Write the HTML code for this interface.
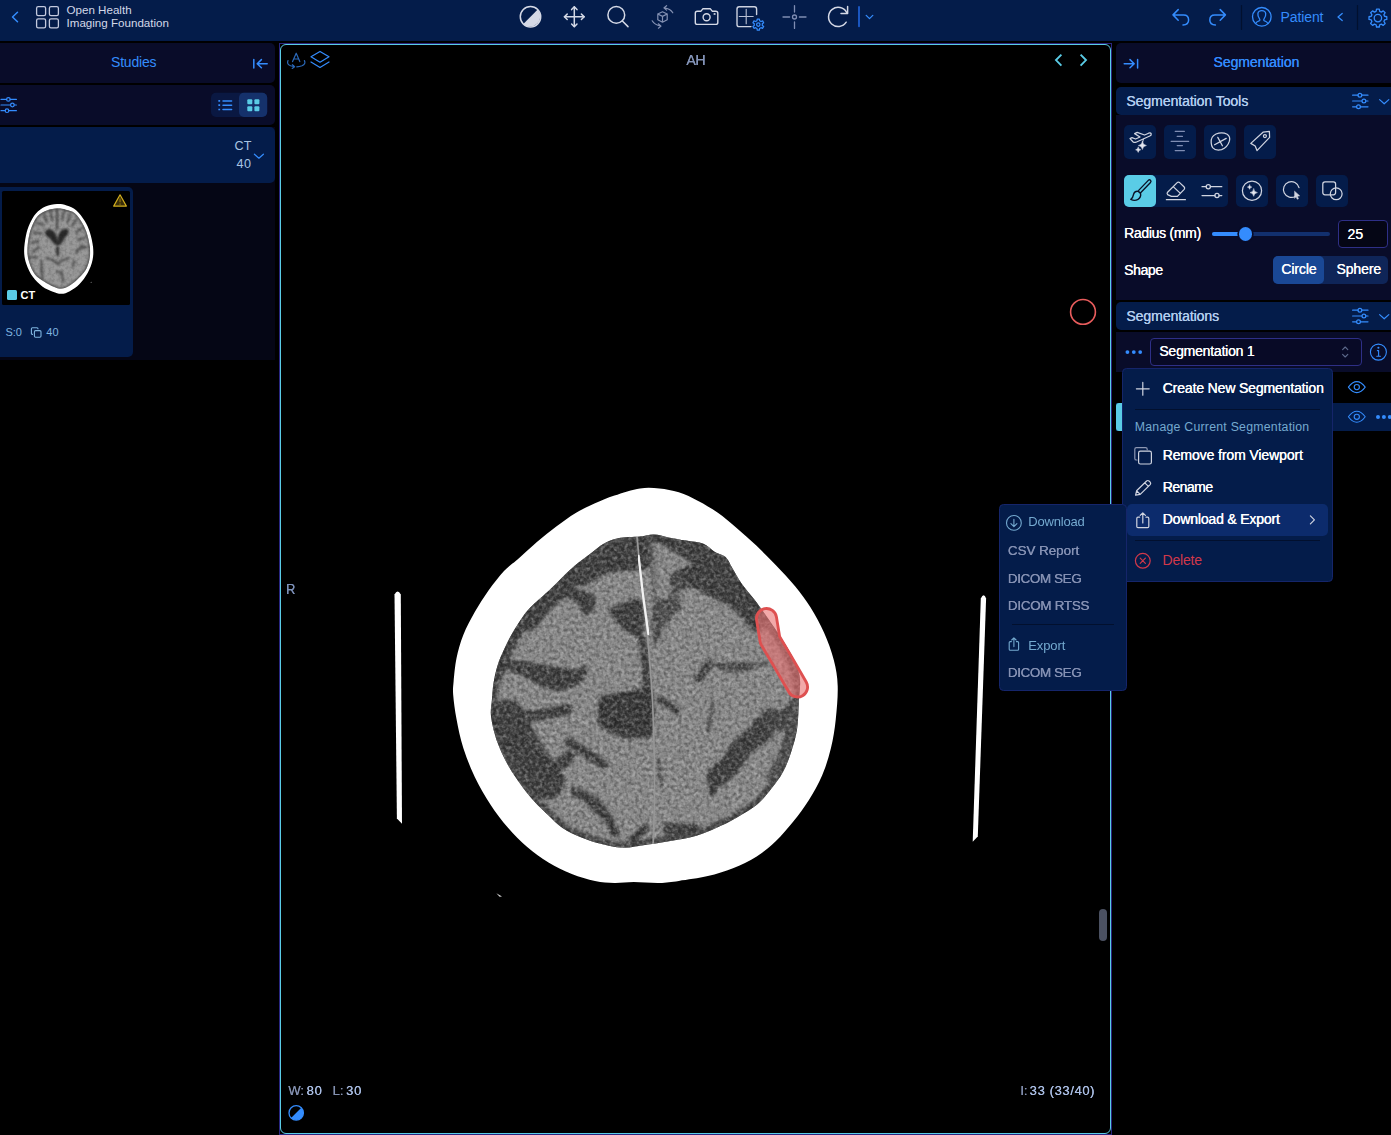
<!DOCTYPE html>
<html lang="en">
<head>
<meta charset="utf-8">
<title>OHIF Viewer</title>
<style>
*{box-sizing:border-box;margin:0;padding:0}
html,body{width:1391px;height:1135px;overflow:hidden;background:#000;font-family:"Liberation Sans",sans-serif;color:#fff}
.abs{position:absolute}
#hdr{position:absolute;left:0;top:0;width:1391px;height:41px;background:#041c4a}
#hdr svg{position:absolute;overflow:visible}
.t{position:absolute;white-space:nowrap;line-height:1}
svg{display:block}
/* left panel */
#lp{position:absolute;left:0;top:43px;width:275px;height:317px;background:linear-gradient(#000 0,#000 84px,#050615 84px)}
.row{position:absolute;left:0;width:275px;background:#090c29;border-radius:0 5px 5px 0}
/* viewport */
#vp{position:absolute;left:279px;top:43px;width:833px;height:1092px;border:1px solid #2a2680;border-radius:0;background:#000}
#vpi{position:absolute;left:0;top:0;right:0;bottom:0;border:1px solid #5acce6;border-radius:6px}
/* right panel */
#rp{position:absolute;left:1116px;top:43px;width:275px;height:388px;background:#000}
.tb{width:32px;height:32.2px;border-radius:5px;background:#041c4a}
.mi{font-size:14px;color:#fff;letter-spacing:0.02px;text-shadow:0.3px 0 0 #fff}
.si{font-size:13.4px;color:#8591b3;letter-spacing:0.1px;text-shadow:0.3px 0 0 #8591b3}
.vt{top:1084px;font-size:13px;color:#a9bde3;text-shadow:0.25px 0 0 currentColor}
#rp .t{text-shadow:0.22px 0 0 currentColor}
</style>
</head>
<body>
<div id="wrap" style="position:absolute;left:0;top:0;width:1391px;height:1135px">
<!-- HEADER -->
<div id="hdr">
<svg width="1391" height="41" viewBox="0 0 1391 41" style="left:0;top:0" fill="none" stroke-linecap="round" stroke-linejoin="round">
 <!-- back chevron -->
 <path d="M17.5 12.2 L12.5 17 L17.5 21.8" stroke="#348cfd" stroke-width="1.5"/>
 <!-- logo squares -->
 <g stroke="#c3c9de" stroke-width="1.3">
  <rect x="36.6" y="6.6" width="9" height="9" rx="1.6"/><rect x="49.4" y="6.6" width="9" height="9" rx="1.6"/>
  <rect x="36.6" y="18.9" width="9" height="9" rx="1.6"/><rect x="49.4" y="18.9" width="9" height="9" rx="1.6"/>
 </g>
 <!-- contrast -->
 <g stroke="#d5d9e6" stroke-width="1.5">
  <circle cx="530.5" cy="16.8" r="10.2"/>
  <path d="M537.7 9.6 A10.2 10.2 0 0 1 523.3 24 Z" fill="#d5d9e6" stroke="none"/>
 </g>
 <!-- move -->
 <g stroke="#d5d9e6" stroke-width="1.5">
  <path d="M574.3 7 V26.6 M564.5 16.8 H584.1"/>
  <path d="M571.6 9.6 L574.3 6.8 L577 9.6 M571.6 24 L574.3 26.8 L577 24 M567.2 14.1 L564.4 16.8 L567.2 19.5 M581.4 14.1 L584.2 16.8 L581.4 19.5"/>
 </g>
 <!-- search -->
 <g stroke="#d5d9e6" stroke-width="1.5">
  <circle cx="616.3" cy="14.9" r="8.4"/><path d="M622.4 21 L628 26.6"/>
 </g>
 <!-- 3d rotate (dim) -->
 <g stroke="#8491b3" stroke-width="1.2">
  <path d="M662.5 11.8 L667.2 14 V19.8 L662.5 22.2 L657.8 19.8 V14 Z M657.8 14 L662.5 16.4 L667.2 14 M662.5 16.4 V22.2"/>
  <path d="M672.8 12.8 Q670.5 8.8 664.2 7.9 M666.6 5.7 L663.9 7.9 L666.6 10.1"/>
  <path d="M652.2 20.8 Q654.6 24.9 660.6 26 M658.4 23.8 L661 26.1 L658.4 28.2"/>
 </g>
 <!-- camera -->
 <g stroke="#d5d9e6" stroke-width="1.4">
  <path d="M697.3 11.2 H701 L702.8 8.8 H710.4 L712.2 11.2 H715.8 Q717.8 11.2 717.8 13.2 V22.4 Q717.8 24.4 715.8 24.4 H697.3 Q695.3 24.4 695.3 22.4 V13.2 Q695.3 11.2 697.3 11.2 Z"/>
  <circle cx="706.6" cy="17.2" r="3.5"/><circle cx="714.6" cy="14" r="0.4"/>
 </g>
 <!-- grid + gear -->
 <g stroke="#cdd2e0" stroke-width="1.4">
  <path d="M756.6 14.6 V9 Q756.6 6.8 754.4 6.8 H739.2 Q737 6.8 737 9 V24.4 Q737 26.6 739.2 26.6 H751"/>
  <path d="M746.2 9.2 V23.8 M739.2 16.5 H753.2" stroke-width="1.1" stroke="#b9c0d4"/>
 </g>
 <g stroke="#348cfd" stroke-width="1.25" stroke-linejoin="round">
  <path d="M756.98 20.72 L757.26 19.00 L759.34 19.00 L759.62 20.72 L761.00 21.52 L762.63 20.90 L763.67 22.70 L762.32 23.80 L762.32 25.40 L763.67 26.50 L762.63 28.30 L761.00 27.68 L759.62 28.48 L759.34 30.20 L757.26 30.20 L756.98 28.48 L755.60 27.68 L753.97 28.30 L752.93 26.50 L754.28 25.40 L754.28 23.80 L752.93 22.70 L753.97 20.90 L755.60 21.52 Z"/>
  <circle cx="758.3" cy="24.6" r="1.7"/>
 </g>
 <!-- crosshair dim -->
 <g stroke="#7f8db3" stroke-width="1.3">
  <path d="M794.5 5.6 V12 M794.5 22 V28.4 M783 17 H789.6 M799.4 17 H806"/><circle cx="794.5" cy="17" r="2"/>
 </g>
 <!-- reset -->
 <g stroke="#d5d9e6" stroke-width="1.5">
  <path d="M846.6 12.4 A9.6 9.6 0 1 0 846.2 22.2"/><path d="M847.6 6.6 V13.5 H841"/>
 </g>
 <path d="M859 7 V26.2" stroke="#1a56c0" stroke-width="2"/>
 <path d="M866.2 15.4 L869.5 18.6 L872.8 15.4" stroke="#348cfd" stroke-width="1.3"/>
 <!-- undo / redo -->
 <g stroke="#348cfd" stroke-width="1.5">
  <path d="M1178.2 9.6 L1173 14.9 L1178.2 20.2 M1173 14.9 H1183.6 Q1188.6 14.9 1188.6 19.9 Q1188.6 24.6 1183 24.9"/>
  <path d="M1220.2 9.6 L1225.4 14.9 L1220.2 20.2 M1225.4 14.9 H1214.8 Q1209.8 14.9 1209.8 19.9 Q1209.8 24.6 1215.4 24.9"/>
 </g>
 <path d="M1241.5 5.5 V29.5 M1357.5 5.5 V29.5" stroke="#02102e" stroke-width="1.2"/>
 <!-- patient -->
 <g stroke="#348cfd" stroke-width="1.3">
  <circle cx="1261.8" cy="16.8" r="9.3"/>
  <path d="M1255.6 23.6 Q1256.4 21.6 1259.6 20.6 Q1260.4 20 1259.4 18.6 Q1257.6 16.4 1257.9 13.6 Q1258.3 10.6 1261.8 10.6 Q1265.3 10.6 1265.7 13.6 Q1266 16.4 1264.2 18.6 Q1263.2 20 1264 20.6 Q1267.2 21.6 1268 23.6"/>
 </g>
 <path d="M1342.2 13.4 L1338 17 L1342.2 20.6" stroke="#348cfd" stroke-width="1.3"/>
 <!-- settings gear -->
 <g stroke="#348cfd" stroke-width="1.3" stroke-linejoin="round">
  <path d="M1376.06 11.45 L1376.54 9.20 L1379.26 9.20 L1379.74 11.45 L1381.30 12.10 L1383.23 10.85 L1385.15 12.77 L1383.90 14.70 L1384.55 16.26 L1386.80 16.74 L1386.80 19.46 L1384.55 19.94 L1383.90 21.50 L1385.15 23.43 L1383.23 25.35 L1381.30 24.10 L1379.74 24.75 L1379.26 27.00 L1376.54 27.00 L1376.06 24.75 L1374.50 24.10 L1372.57 25.35 L1370.65 23.43 L1371.90 21.50 L1371.25 19.94 L1369.00 19.46 L1369.00 16.74 L1371.25 16.26 L1371.90 14.70 L1370.65 12.77 L1372.57 10.85 L1374.50 12.10 Z"/>
  <circle cx="1377.9" cy="18.1" r="3.7"/>
 </g>
</svg>
<div class="t" style="left:66.5px;top:3.6px;font-size:11.6px;color:#d3d8e8;letter-spacing:0px">Open Health</div>
<div class="t" style="left:66.5px;top:17.4px;font-size:11.6px;color:#d3d8e8;letter-spacing:0px">Imaging Foundation</div>
<div class="t" style="left:1280.5px;top:9.5px;font-size:14px;color:#348cfd;letter-spacing:-0.1px">Patient</div>
</div>
<!-- LEFT PANEL -->
<div id="lp">
<div class="row" style="top:0;height:40px"></div>
<div class="row" style="top:42px;height:39.5px"></div>
<div class="row" style="top:84px;height:55.5px;background:#041c4a"></div>
<div class="t" style="left:111px;top:12px;font-size:14px;color:#348cfd;letter-spacing:-0.2px">Studies</div>
<svg class="abs" style="left:0;top:0" width="275" height="317" viewBox="0 43 275 317" fill="none" stroke-linecap="round" stroke-linejoin="round">
 <!-- collapse icon -->
 <path d="M253.8 59.4 V68 M267.2 63.7 H257.4 M261.4 59.6 L257.2 63.7 L261.4 67.8" stroke="#348cfd" stroke-width="1.5"/>
 <!-- filter sliders -->
 <g stroke="#348cfd" stroke-width="1.2">
  <path d="M1 99.4 H6.6 M10.2 99.4 H16.4 M1 105 H10.6 M14.2 105 H16.4 M1 110.7 H5.2 M8.8 110.7 H16.4"/>
  <circle cx="8.4" cy="99.4" r="1.8"/><circle cx="12.4" cy="105" r="1.8"/><circle cx="7" cy="110.7" r="1.8"/>
 </g>
 <!-- toggle -->
 <rect x="211" y="92.8" width="56.2" height="24.2" rx="5" fill="#0a1842" stroke="none"/>
 <rect x="239" y="92.8" width="28.2" height="24.2" rx="5" fill="#15316b" stroke="none"/>
 <g stroke="#348cfd" stroke-width="1.5">
  <path d="M223 100.9 H231.6 M223 105.2 H231.6 M223 109.5 H231.6"/>
  <path d="M219.2 100.9 H219.3 M219.2 105.2 H219.3 M219.2 109.5 H219.3" stroke-width="1.7" stroke-linecap="square"/>
 </g>
 <g fill="#5acce6" stroke="none">
  <rect x="247.3" y="99.2" width="5" height="5" rx="1"/><rect x="254.4" y="99.2" width="5" height="5" rx="1"/>
  <rect x="247.3" y="106.2" width="5" height="5" rx="1"/><rect x="254.4" y="106.2" width="5" height="5" rx="1"/>
 </g>
 <path d="M254.4 154.2 L258.9 158.2 L263.4 154.2" stroke="#348cfd" stroke-width="1.2"/>
</svg>
<div class="t" style="left:200px;width:51.4px;text-align:right;top:96.6px;font-size:12.6px;color:#a9c5e3">CT</div>
<div class="t" style="left:200px;width:51.4px;text-align:right;top:114.6px;font-size:12.6px;color:#a9c5e3;letter-spacing:0.5px">40</div>
<!-- thumb card -->
<div class="abs" style="left:0;top:144px;width:133px;height:169.6px;background:#041c4a;border-radius:0 5px 5px 0"></div>
<div class="abs" id="thumb" style="left:2px;top:148px;width:128px;height:114px;background:#000;border-radius:1.5px;overflow:hidden">
<svg width="128" height="114" viewBox="19 28 1210 1078" style="position:absolute;left:0;top:0">
<defs><filter id="tb" x="-10%" y="-10%" width="120%" height="120%"><feGaussianBlur stdDeviation="9"/></filter>
<filter id="tn" x="0" y="0" width="100%" height="100%"><feTurbulence type="fractalNoise" baseFrequency="0.035" numOctaves="2" seed="3"/><feColorMatrix type="matrix" values="0 0 0 0 0  0 0 0 0 0  0 0 0 0 0  1.8 0 0 0 -0.7"/></filter>
<clipPath id="tclip"><path d="M541.4 192.0 C511.3 193.4 472.8 201.0 442.0 213.2 C411.1 225.4 379.5 240.8 356.3 265.2 C333.1 289.6 316.8 326.7 302.9 359.4 C289.0 392.0 280.4 421.4 272.9 461.1 C265.4 500.7 257.2 556.5 257.9 597.5 C258.6 638.5 265.0 670.2 277.0 707.0 C289.1 743.7 306.6 788.1 330.3 817.9 C354.0 847.7 389.7 866.9 419.1 886.0 C448.5 905.1 480.1 921.4 506.4 932.4 C532.8 943.5 553.6 952.7 577.2 952.1 C600.8 951.4 623.1 942.5 647.9 928.6 C672.7 914.6 699.5 893.1 726.0 868.5 C752.5 843.8 786.8 813.9 806.9 780.9 C827.0 747.9 839.4 707.1 846.6 670.5 C853.7 633.9 853.9 600.6 850.0 561.2 C846.2 521.7 835.1 472.0 823.4 433.8 C811.6 395.6 798.8 364.7 779.5 331.9 C760.2 299.2 733.7 258.6 707.6 237.3 C681.4 216.0 650.4 211.9 622.8 204.3 C595.1 196.8 571.5 190.5 541.4 192.0 Z"/></clipPath></defs>
<path d="M540.0 152.0 C506.7 153.7 463.3 160.3 430.0 175.0 C396.7 189.7 365.0 212.5 340.0 240.0 C315.0 267.5 295.8 305.0 280.0 340.0 C264.2 375.0 253.7 406.7 245.0 450.0 C236.3 493.3 227.2 555.0 228.0 600.0 C228.8 645.0 236.3 680.0 250.0 720.0 C263.7 760.0 285.0 805.0 310.0 840.0 C335.0 875.0 368.3 906.7 400.0 930.0 C431.7 953.3 470.0 968.3 500.0 980.0 C530.0 991.7 553.3 1000.8 580.0 1000.0 C606.7 999.2 631.7 990.0 660.0 975.0 C688.3 960.0 721.7 939.2 750.0 910.0 C778.3 880.8 809.2 838.3 830.0 800.0 C850.8 761.7 866.7 720.0 875.0 680.0 C883.3 640.0 884.2 603.3 880.0 560.0 C875.8 516.7 863.3 461.7 850.0 420.0 C836.7 378.3 821.7 345.0 800.0 310.0 C778.3 275.0 748.3 234.2 720.0 210.0 C691.7 185.8 660.0 174.7 630.0 165.0 C600.0 155.3 573.3 150.3 540.0 152.0 Z" fill="#fff"/>
<path d="M541.4 192.0 C511.3 193.4 472.8 201.0 442.0 213.2 C411.1 225.4 379.5 240.8 356.3 265.2 C333.1 289.6 316.8 326.7 302.9 359.4 C289.0 392.0 280.4 421.4 272.9 461.1 C265.4 500.7 257.2 556.5 257.9 597.5 C258.6 638.5 265.0 670.2 277.0 707.0 C289.1 743.7 306.6 788.1 330.3 817.9 C354.0 847.7 389.7 866.9 419.1 886.0 C448.5 905.1 480.1 921.4 506.4 932.4 C532.8 943.5 553.6 952.7 577.2 952.1 C600.8 951.4 623.1 942.5 647.9 928.6 C672.7 914.6 699.5 893.1 726.0 868.5 C752.5 843.8 786.8 813.9 806.9 780.9 C827.0 747.9 839.4 707.1 846.6 670.5 C853.7 633.9 853.9 600.6 850.0 561.2 C846.2 521.7 835.1 472.0 823.4 433.8 C811.6 395.6 798.8 364.7 779.5 331.9 C760.2 299.2 733.7 258.6 707.6 237.3 C681.4 216.0 650.4 211.9 622.8 204.3 C595.1 196.8 571.5 190.5 541.4 192.0 Z" fill="#999"/>
<g clip-path="url(#tclip)">
<g filter="url(#tb)" fill="none" stroke-linecap="round" stroke-linejoin="round">
 <path d="M541.4 192.0 C511.3 193.4 472.8 201.0 442.0 213.2 C411.1 225.4 379.5 240.8 356.3 265.2 C333.1 289.6 316.8 326.7 302.9 359.4 C289.0 392.0 280.4 421.4 272.9 461.1 C265.4 500.7 257.2 556.5 257.9 597.5 C258.6 638.5 265.0 670.2 277.0 707.0 C289.1 743.7 306.6 788.1 330.3 817.9 C354.0 847.7 389.7 866.9 419.1 886.0 C448.5 905.1 480.1 921.4 506.4 932.4 C532.8 943.5 553.6 952.7 577.2 952.1 C600.8 951.4 623.1 942.5 647.9 928.6 C672.7 914.6 699.5 893.1 726.0 868.5 C752.5 843.8 786.8 813.9 806.9 780.9 C827.0 747.9 839.4 707.1 846.6 670.5 C853.7 633.9 853.9 600.6 850.0 561.2 C846.2 521.7 835.1 472.0 823.4 433.8 C811.6 395.6 798.8 364.7 779.5 331.9 C760.2 299.2 733.7 258.6 707.6 237.3 C681.4 216.0 650.4 211.9 622.8 204.3 C595.1 196.8 571.5 190.5 541.4 192.0 Z" stroke="#505050" stroke-width="22" fill="none"/>
 <g stroke="#555" stroke-width="22">
  <path d="M350 330 L410 350 M320 420 L390 430 M300 520 L360 500 M310 600 L370 560 M420 250 L440 320 M480 225 L490 300"/>
  <path d="M600 230 L590 300 M660 250 L640 320 M720 300 L680 360 M770 380 L720 420 M800 470 L740 490 M810 560 L750 570 M720 610 L780 540"/>
  <path d="M280 650 L350 660 M390 690 L400 850 M700 690 L690 740 M440 660 L520 690 L545 720 L580 690 L650 660 M540 790 L580 800 L600 880"/>
 </g>
 <path d="M540 205 L540 390" stroke="#3c3c3c" stroke-width="18"/>
 <g fill="#2a2a2a" stroke="#2a2a2a" stroke-width="10">
  <path d="M440 400 Q470 385 505 410 Q530 440 535 480 L540 540 Q500 520 480 480 Q440 450 430 425 Z"/>
  <path d="M640 395 Q610 385 580 405 Q555 435 550 480 L545 540 Q590 520 605 470 Q640 440 645 415 Z"/>
  <path d="M535 560 L555 560 L550 640 L540 640 Z"/>
 </g>
</g>
<rect x="200" y="140" width="700" height="880" filter="url(#tn)" opacity="0.2"/>
</g>
<circle cx="862" cy="890" r="5" fill="#999"/>
<!-- warning -->
<path d="M1135 64 L1075 171 L1195 171 Z" fill="#3a2e08" stroke="#d2ae1e" stroke-width="11" stroke-linejoin="round"/>
<path d="M1135 100 V134" stroke="#8f7512" stroke-width="11" stroke-linecap="butt"/><rect x="1129" y="146" width="12" height="12" fill="#8f7512"/>
</svg>
</div>
<div class="abs" style="left:7px;top:247.4px;width:9.6px;height:9.6px;background:#5acce6;border-radius:1.5px"></div>
<div class="t" style="left:20.6px;top:246.8px;font-size:11px;font-weight:bold;color:#fff">CT</div>
<div class="t" style="left:5.4px;top:284.2px;font-size:11px;color:#7fb5e0">S:0</div>
<div class="t" style="left:46.2px;top:284.2px;font-size:11px;color:#7fb5e0;letter-spacing:0.3px">40</div>
<svg class="abs" style="left:30px;top:283px" width="13" height="13" viewBox="0 0 13 13" fill="none" stroke="#7fb5e0" stroke-width="1.1" stroke-linejoin="round">
 <rect x="4.4" y="4.6" width="6.6" height="6.6" rx="1.2"/><path d="M3 8.4 H2.4 Q1.4 8.4 1.4 7.4 V2.8 Q1.4 1.8 2.4 1.8 H7 Q8 1.8 8 2.8 V3.2"/>
</svg>
</div>
<!-- VIEWPORT -->
<div id="vp"><div id="vpi"></div></div>
<!--CT-START-->
<svg id="ct" width="1391" height="1135" viewBox="0 0 1391 1135" style="position:absolute;left:0;top:0">
<defs>
 <filter id="bl" x="-5%" y="-5%" width="110%" height="110%"><feGaussianBlur stdDeviation="1.7"/></filter>
 <filter id="bs" x="-5%" y="-5%" width="110%" height="110%"><feGaussianBlur stdDeviation="0.7"/></filter>
 <filter id="nz" x="0" y="0" width="100%" height="100%"><feTurbulence type="fractalNoise" baseFrequency="0.28" numOctaves="2" seed="7"/><feColorMatrix type="matrix" values="0 0 0 0 0.62  0 0 0 0 0.62  0 0 0 0 0.62  2.0 0 0 0 -0.75"/><feGaussianBlur stdDeviation="0.7"/></filter>
 <filter id="nz2" x="0" y="0" width="100%" height="100%"><feTurbulence type="fractalNoise" baseFrequency="0.28" numOctaves="2" seed="23"/><feColorMatrix type="matrix" values="0 0 0 0 0  0 0 0 0 0  0 0 0 0 0  2.0 0 0 0 -0.75"/><feGaussianBlur stdDeviation="0.7"/></filter>
 <clipPath id="bclip"><path d="M640.0 536.5 C646.0 535.9 649.2 534.4 654.0 534.5 C658.8 534.6 663.2 536.4 668.5 537.4 C673.8 538.4 680.2 539.5 686.0 540.6 C691.8 541.7 698.6 541.9 703.4 543.8 C708.1 545.6 710.8 549.5 714.5 551.7 C718.2 553.9 722.7 554.4 725.6 557.0 C728.5 559.6 729.4 563.2 732.0 567.6 C734.6 572.0 737.8 578.1 741.5 583.4 C745.2 588.7 750.8 594.9 754.2 599.3 C757.6 603.7 758.0 604.4 762.0 610.0 C766.0 615.6 773.8 626.7 778.0 633.0 C782.2 639.3 784.5 642.8 787.5 648.0 C790.5 653.2 793.9 658.7 796.0 664.0 C798.1 669.3 799.5 674.1 800.0 680.0 C800.5 685.9 799.5 691.2 799.0 699.5 C798.5 707.8 798.4 720.6 797.0 729.6 C795.6 738.6 793.1 746.2 790.7 753.4 C788.3 760.5 785.9 766.7 782.7 772.5 C779.5 778.3 775.8 783.0 771.6 788.3 C767.4 793.6 763.5 799.2 757.4 804.2 C751.3 809.2 742.1 814.5 735.2 818.5 C728.3 822.5 722.7 825.1 716.1 828.0 C709.5 830.9 702.9 833.8 695.5 835.9 C688.1 838.0 679.6 839.3 671.7 840.7 C663.8 842.1 656.2 843.3 648.0 844.5 C639.8 845.7 630.6 847.9 622.7 847.8 C614.8 847.7 607.4 845.5 600.5 843.8 C593.6 842.1 587.8 840.1 581.5 837.5 C575.2 834.9 568.0 831.7 562.5 828.0 C557.0 824.3 553.0 819.8 548.2 815.3 C543.4 810.8 538.4 806.0 533.9 801.0 C529.4 796.0 525.4 791.0 521.2 785.2 C517.0 779.4 512.5 773.2 508.5 766.1 C504.5 759.0 500.3 750.5 497.4 742.3 C494.5 734.1 492.0 724.0 491.1 717.0 C490.2 710.0 491.5 705.6 491.9 700.0 C492.3 694.4 492.6 689.0 493.5 683.3 C494.4 677.6 495.7 671.4 497.4 665.9 C499.1 660.4 501.4 655.3 503.8 650.0 C506.2 644.7 508.5 639.8 511.7 634.2 C514.9 628.7 519.4 621.5 522.8 616.7 C526.2 611.9 527.8 610.1 532.3 605.6 C536.8 601.1 544.2 595.1 549.8 589.8 C555.3 584.5 560.9 578.4 565.6 573.9 C570.4 569.4 574.1 566.2 578.3 562.8 C582.5 559.4 586.8 556.5 591.0 553.3 C595.2 550.1 599.2 546.3 603.7 543.8 C608.2 541.3 612.0 539.4 618.0 538.2 C624.0 537.0 634.0 537.1 640.0 536.5 Z"/></clipPath>
</defs>
<g filter="url(#bs)">
 <path d="M640.0 488.4 C647.5 487.2 652.9 487.8 659.4 488.4 C665.9 489.0 672.3 490.2 678.8 492.3 C685.3 494.4 691.8 497.6 698.2 501.0 C704.7 504.4 711.0 508.1 717.5 512.6 C724.0 517.1 730.4 522.7 736.9 528.2 C743.4 533.7 749.8 539.5 756.3 545.6 C762.8 551.7 769.2 558.2 775.7 565.0 C782.2 571.8 789.3 579.2 795.1 586.3 C800.9 593.4 805.8 599.9 810.6 607.6 C815.4 615.4 820.2 624.1 824.1 632.8 C828.0 641.5 831.5 651.1 833.8 660.0 C836.1 668.9 837.4 676.2 837.7 686.0 C838.0 695.8 836.9 708.6 835.8 719.0 C834.7 729.4 833.2 738.8 830.9 748.2 C828.6 757.6 825.9 766.6 822.2 775.3 C818.5 784.0 813.5 792.8 808.6 800.5 C803.8 808.2 798.6 815.0 793.1 821.8 C787.6 828.6 781.8 835.4 775.7 841.2 C769.6 847.0 763.4 852.2 756.3 856.7 C749.2 861.2 741.1 865.1 733.0 868.3 C724.9 871.5 716.8 874.0 707.8 876.1 C698.8 878.2 686.9 879.8 678.8 880.9 C670.7 882.0 666.9 882.7 659.4 882.9 C651.9 883.1 641.3 881.9 633.8 881.9 C626.3 881.9 621.0 883.0 614.5 882.9 C608.0 882.8 602.1 882.5 595.0 881.0 C587.9 879.5 579.5 877.2 571.8 874.1 C564.0 871.0 555.9 867.0 548.5 862.5 C541.1 858.0 534.0 852.8 527.2 847.0 C520.4 841.2 513.9 834.7 507.8 827.6 C501.7 820.5 495.9 812.8 490.4 804.4 C484.9 796.0 479.4 786.6 474.9 777.2 C470.4 767.8 466.4 757.7 463.3 748.0 C460.2 738.3 458.2 727.8 456.5 719.0 C454.8 710.2 453.7 701.2 453.2 695.0 C452.7 688.8 453.1 687.7 453.6 681.6 C454.2 675.5 454.9 666.1 456.5 658.3 C458.1 650.5 460.2 642.8 463.3 635.0 C466.4 627.2 470.7 619.2 474.9 611.8 C479.1 604.4 483.6 597.3 488.5 590.5 C493.4 583.7 499.2 576.2 504.0 571.0 C508.8 565.8 512.0 564.3 517.5 559.5 C523.0 554.7 530.4 547.5 536.9 542.0 C543.4 536.5 549.8 531.3 556.3 526.5 C562.8 521.7 569.2 516.9 575.7 513.0 C582.2 509.1 588.5 506.2 595.0 503.3 C601.5 500.4 607.0 498.0 614.5 495.5 C622.0 493.0 632.5 489.6 640.0 488.4 Z" fill="#fff"/>
 <path d="M640.0 536.5 C646.0 535.9 649.2 534.4 654.0 534.5 C658.8 534.6 663.2 536.4 668.5 537.4 C673.8 538.4 680.2 539.5 686.0 540.6 C691.8 541.7 698.6 541.9 703.4 543.8 C708.1 545.6 710.8 549.5 714.5 551.7 C718.2 553.9 722.7 554.4 725.6 557.0 C728.5 559.6 729.4 563.2 732.0 567.6 C734.6 572.0 737.8 578.1 741.5 583.4 C745.2 588.7 750.8 594.9 754.2 599.3 C757.6 603.7 758.0 604.4 762.0 610.0 C766.0 615.6 773.8 626.7 778.0 633.0 C782.2 639.3 784.5 642.8 787.5 648.0 C790.5 653.2 793.9 658.7 796.0 664.0 C798.1 669.3 799.5 674.1 800.0 680.0 C800.5 685.9 799.5 691.2 799.0 699.5 C798.5 707.8 798.4 720.6 797.0 729.6 C795.6 738.6 793.1 746.2 790.7 753.4 C788.3 760.5 785.9 766.7 782.7 772.5 C779.5 778.3 775.8 783.0 771.6 788.3 C767.4 793.6 763.5 799.2 757.4 804.2 C751.3 809.2 742.1 814.5 735.2 818.5 C728.3 822.5 722.7 825.1 716.1 828.0 C709.5 830.9 702.9 833.8 695.5 835.9 C688.1 838.0 679.6 839.3 671.7 840.7 C663.8 842.1 656.2 843.3 648.0 844.5 C639.8 845.7 630.6 847.9 622.7 847.8 C614.8 847.7 607.4 845.5 600.5 843.8 C593.6 842.1 587.8 840.1 581.5 837.5 C575.2 834.9 568.0 831.7 562.5 828.0 C557.0 824.3 553.0 819.8 548.2 815.3 C543.4 810.8 538.4 806.0 533.9 801.0 C529.4 796.0 525.4 791.0 521.2 785.2 C517.0 779.4 512.5 773.2 508.5 766.1 C504.5 759.0 500.3 750.5 497.4 742.3 C494.5 734.1 492.0 724.0 491.1 717.0 C490.2 710.0 491.5 705.6 491.9 700.0 C492.3 694.4 492.6 689.0 493.5 683.3 C494.4 677.6 495.7 671.4 497.4 665.9 C499.1 660.4 501.4 655.3 503.8 650.0 C506.2 644.7 508.5 639.8 511.7 634.2 C514.9 628.7 519.4 621.5 522.8 616.7 C526.2 611.9 527.8 610.1 532.3 605.6 C536.8 601.1 544.2 595.1 549.8 589.8 C555.3 584.5 560.9 578.4 565.6 573.9 C570.4 569.4 574.1 566.2 578.3 562.8 C582.5 559.4 586.8 556.5 591.0 553.3 C595.2 550.1 599.2 546.3 603.7 543.8 C608.2 541.3 612.0 539.4 618.0 538.2 C624.0 537.0 634.0 537.1 640.0 536.5 Z" fill="#8c8c8c"/>
</g>
<g clip-path="url(#bclip)">
 <g filter="url(#bl)" fill="#3b3b3b" stroke="#3b3b3b" stroke-linecap="round" stroke-linejoin="round">
  <path d="M640.0 536.5 C646.0 535.9 649.2 534.4 654.0 534.5 C658.8 534.6 663.2 536.4 668.5 537.4 C673.8 538.4 680.2 539.5 686.0 540.6 C691.8 541.7 698.6 541.9 703.4 543.8 C708.1 545.6 710.8 549.5 714.5 551.7 C718.2 553.9 722.7 554.4 725.6 557.0 C728.5 559.6 729.4 563.2 732.0 567.6 C734.6 572.0 737.8 578.1 741.5 583.4 C745.2 588.7 750.8 594.9 754.2 599.3 C757.6 603.7 758.0 604.4 762.0 610.0 C766.0 615.6 773.8 626.7 778.0 633.0 C782.2 639.3 784.5 642.8 787.5 648.0 C790.5 653.2 793.9 658.7 796.0 664.0 C798.1 669.3 799.5 674.1 800.0 680.0 C800.5 685.9 799.5 691.2 799.0 699.5 C798.5 707.8 798.4 720.6 797.0 729.6 C795.6 738.6 793.1 746.2 790.7 753.4 C788.3 760.5 785.9 766.7 782.7 772.5 C779.5 778.3 775.8 783.0 771.6 788.3 C767.4 793.6 763.5 799.2 757.4 804.2 C751.3 809.2 742.1 814.5 735.2 818.5 C728.3 822.5 722.7 825.1 716.1 828.0 C709.5 830.9 702.9 833.8 695.5 835.9 C688.1 838.0 679.6 839.3 671.7 840.7 C663.8 842.1 656.2 843.3 648.0 844.5 C639.8 845.7 630.6 847.9 622.7 847.8 C614.8 847.7 607.4 845.5 600.5 843.8 C593.6 842.1 587.8 840.1 581.5 837.5 C575.2 834.9 568.0 831.7 562.5 828.0 C557.0 824.3 553.0 819.8 548.2 815.3 C543.4 810.8 538.4 806.0 533.9 801.0 C529.4 796.0 525.4 791.0 521.2 785.2 C517.0 779.4 512.5 773.2 508.5 766.1 C504.5 759.0 500.3 750.5 497.4 742.3 C494.5 734.1 492.0 724.0 491.1 717.0 C490.2 710.0 491.5 705.6 491.9 700.0 C492.3 694.4 492.6 689.0 493.5 683.3 C494.4 677.6 495.7 671.4 497.4 665.9 C499.1 660.4 501.4 655.3 503.8 650.0 C506.2 644.7 508.5 639.8 511.7 634.2 C514.9 628.7 519.4 621.5 522.8 616.7 C526.2 611.9 527.8 610.1 532.3 605.6 C536.8 601.1 544.2 595.1 549.8 589.8 C555.3 584.5 560.9 578.4 565.6 573.9 C570.4 569.4 574.1 566.2 578.3 562.8 C582.5 559.4 586.8 556.5 591.0 553.3 C595.2 550.1 599.2 546.3 603.7 543.8 C608.2 541.3 612.0 539.4 618.0 538.2 C624.0 537.0 634.0 537.1 640.0 536.5 Z" fill="none" stroke-width="11" stroke="#444"/>
  <path d="M582.0 571.0 C585.0 569.2 593.3 562.5 600.0 560.0 C606.7 557.5 615.2 556.8 622.0 556.0 C628.8 555.2 637.8 555.2 641.0 555.0" stroke-width="30"/>
  <path d="M566.0 582.0 C562.5 585.0 551.3 593.7 545.0 600.0 C538.7 606.3 530.8 616.7 528.0 620.0" stroke-width="22"/>
  <path d="M548.0 584.0 C551.5 585.3 562.0 589.3 569.0 592.0 C576.0 594.7 587.2 597.0 590.0 600.0 C592.8 603.0 586.7 608.3 586.0 610.0" stroke-width="11"/>
  <path d="M524.0 618.0 C521.7 621.7 514.0 633.0 510.0 640.0 C506.0 647.0 502.2 654.7 500.0 660.0 C497.8 665.3 497.5 670.0 497.0 672.0" stroke-width="16"/>
  <path d="M640.0 600.0 C636.3 597.2 627.0 601.3 622.0 603.0 C617.0 604.7 611.0 606.8 610.0 610.0 C609.0 613.2 613.0 618.3 616.0 622.0 C619.0 625.7 623.8 629.5 628.0 632.0 C632.2 634.5 638.3 639.0 641.0 637.0 C643.7 635.0 644.2 626.2 644.0 620.0 C643.8 613.8 643.7 602.8 640.0 600.0 Z" stroke="none"/>
  <path d="M500.0 658.0 C502.2 659.3 508.3 663.5 513.0 666.0 C517.7 668.5 521.7 669.8 528.0 673.0 C534.3 676.2 544.7 683.2 551.0 685.0 C557.3 686.8 561.7 685.0 566.0 684.0 C570.3 683.0 574.2 681.2 577.0 679.0 C579.8 676.8 582.0 672.3 583.0 671.0" stroke-width="10"/>
  <path d="M642.0 640.0 C642.5 643.3 644.0 651.0 645.0 660.0 C646.0 669.0 647.5 688.3 648.0 694.0" stroke-width="8"/>
  <path d="M650.0 537.0 C656.7 537.8 678.7 539.0 690.0 542.0 C701.3 545.0 710.0 548.7 718.0 555.0 C726.0 561.3 732.3 572.5 738.0 580.0 C743.7 587.5 749.7 596.7 752.0 600.0" stroke-width="11"/>
  <path d="M679.6 580.3 C683.6 579.0 696.2 571.8 703.4 572.3 C710.5 572.8 716.1 578.4 722.5 583.4 C728.9 588.4 735.7 596.1 741.5 602.5 C747.3 608.9 754.8 618.3 757.4 621.5" stroke-width="20"/>
  <path d="M679.6 580.3 C678.3 584.0 674.3 596.2 671.7 602.5 C669.1 608.8 665.1 615.7 663.8 618.3" stroke-width="9" stroke="#505050"/>
  <path d="M654.0 603.0 C657.8 596.1 671.7 598.5 676.0 599.5 C680.3 600.5 681.8 604.8 680.0 609.0 C678.2 613.2 668.5 619.7 665.0 625.0 C661.5 630.3 660.9 638.3 659.0 641.0 C657.1 643.7 654.3 647.3 653.5 641.0 C652.7 634.7 650.2 609.9 654.0 603.0 Z" stroke="none" fill="#4e4e4e"/>
  <path d="M652.0 545.0 C652.5 554.2 654.5 590.8 655.0 600.0" stroke-width="5" stroke="#6a6a6a"/>
  <path d="M698.7 678.6 C700.6 676.0 707.9 665.4 709.8 662.7" stroke-width="8"/>
  <path d="M709.8 662.7 C714.0 664.0 725.5 670.7 735.0 670.7 C744.5 670.7 761.7 664.0 767.0 662.7" stroke-width="4" stroke="#555"/>
  <path d="M762.0 612.0 C765.0 616.0 774.7 627.7 780.0 636.0 C785.3 644.3 790.7 653.0 794.0 662.0 C797.3 671.0 799.0 685.3 800.0 690.0" stroke-width="12"/>
  <path d="M602.1 696.3 C607.0 693.4 619.2 692.6 627.5 691.6 C635.8 690.6 647.9 682.9 652.0 690.0 C656.1 697.1 654.2 726.5 652.0 734.4 C649.8 742.3 643.5 737.1 638.6 737.6 C633.7 738.1 629.1 739.5 622.7 737.6 C616.4 735.8 604.6 731.3 600.5 726.5 C596.4 721.7 597.8 714.0 598.1 709.0 C598.4 704.0 597.2 699.2 602.1 696.3 Z" stroke="none" fill="#363636"/>
  <path d="M507.0 717.0 C508.8 720.5 514.0 730.8 518.0 738.0 C522.0 745.2 526.2 752.7 531.0 760.0 C535.8 767.3 544.3 778.3 547.0 782.0" stroke-width="35"/>
  <path d="M497.0 713.0 C502.5 713.5 521.0 716.0 530.0 716.0 C539.0 716.0 544.8 714.1 551.0 713.0 C557.2 711.9 564.3 710.1 567.0 709.5" stroke-width="11"/>
  <path d="M568.8 742.3 C570.9 743.6 575.7 746.3 581.5 750.0 C587.3 753.7 600.0 762.1 603.7 764.5" stroke-width="9"/>
  <path d="M552.0 772.0 C554.8 769.4 566.0 759.2 568.8 756.6" stroke-width="12"/>
  <path d="M575.0 791.5 C578.2 793.1 588.7 796.8 594.0 801.0 C599.3 805.2 603.5 811.7 607.0 817.0 C610.5 822.3 613.5 830.1 614.8 832.7" stroke-width="9"/>
  <path d="M632.0 840.7 C634.2 838.6 642.8 830.1 645.0 828.0" stroke-width="8"/>
  <path d="M713.0 702.7 C712.2 707.4 708.8 726.3 708.0 731.0" stroke-width="4" stroke="#505050"/>
  <path d="M660.6 699.5 C663.2 701.4 673.9 708.8 676.5 710.6" stroke-width="7"/>
  <path d="M795.0 706.0 C791.7 708.3 781.3 717.0 775.0 720.0 C768.7 723.0 760.0 723.3 757.0 724.0" stroke-width="10"/>
  <path d="M764.0 730.0 C760.3 733.0 747.7 742.2 742.0 748.0 C736.3 753.8 734.2 760.2 730.0 765.0 C725.8 769.8 719.2 775.0 717.0 777.0" stroke-width="21"/>
  <path d="M770.0 718.0 C773.3 719.0 786.7 723.0 790.0 724.0" stroke-width="20" stroke="#424242"/>
  <path d="M716.0 776.0 C715.3 778.7 712.7 789.3 712.0 792.0" stroke-width="8"/>
  <path d="M798.0 705.0 C797.5 709.2 797.0 721.2 795.0 730.0 C793.0 738.8 789.2 750.0 786.0 758.0 C782.8 766.0 777.7 774.7 776.0 778.0" stroke-width="18" stroke="#4c4c4c"/>
  <path d="M659.0 761.0 C659.3 765.0 660.3 781.0 660.6 785.0" stroke-width="4" stroke="#555"/>
  <path d="M668.5 829.0 C672.8 829.2 689.8 829.8 694.0 830.0" stroke-width="12"/>
 </g>
 <rect x="485" y="530" width="320" height="322" filter="url(#nz)" opacity="0.5" style="mix-blend-mode:normal" fill="#fff"/>
 <rect x="485" y="530" width="320" height="322" filter="url(#nz2)" opacity="0.36"/>
 <!-- falx -->
 <path d="M637 537 Q641 580 645.5 615 Q650 660 652.5 700 Q655 760 654.5 800 Q654 825 653 846" fill="none" stroke="#969696" stroke-width="1.7" filter="url(#bs)"/>
 <path d="M638.6 556 Q642.5 595 648.4 634" fill="none" stroke="#f2f2f2" stroke-width="2.3" stroke-linecap="round" filter="url(#bs)"/>
</g>
<!-- side bars -->
<path d="M394.5 594.5 Q397.6 588.5 400.8 594.5 L402 823.7 L396.9 818.4 Z" fill="#fff"/>
<path d="M980.8 598.5 Q983.8 592 986.1 598.5 L977.8 836.5 L972.7 841.8 Z" fill="#fff"/>
<path d="M496.4 893.2 L502 896.6 L499.6 896.8 Z" fill="#ddd"/>
<!-- segmentation -->
<mask id="ring" maskUnits="userSpaceOnUse" x="740" y="590" width="90" height="130">
 <path d="M766.5 618.5 L770 640 L783 662 L797.5 687" fill="none" stroke="#fff" stroke-width="23" stroke-linecap="round" stroke-linejoin="round"/>
 <path d="M766.5 618.5 L770 640 L783 662 L797.5 687" fill="none" stroke="#000" stroke-width="17.2" stroke-linecap="round" stroke-linejoin="round"/>
</mask>
<path d="M766.5 618.5 L770 640 L783 662 L797.5 687" fill="none" stroke="#ea7474" stroke-opacity="0.62" stroke-width="18.5" stroke-linecap="round" stroke-linejoin="round"/>
<rect x="740" y="590" width="90" height="130" fill="#de5050" mask="url(#ring)"/>
<!-- brush cursor -->
<circle cx="1083" cy="311.9" r="12.4" fill="none" stroke="#e85c5c" stroke-width="1.6"/>
</svg>
<!--CT-END-->
<!-- RIGHT PANEL -->
<div id="rp">
<div class="abs" style="left:0;top:0;width:275px;height:39.5px;background:#090c29;border-radius:5px 0 0 5px"></div>
<div class="abs" style="left:0;top:44px;width:275px;height:28px;background:#041c4a;border-radius:5px 0 0 5px"></div>
<div class="abs" style="left:0;top:72px;width:275px;height:185px;background:#090c29"></div>
<div class="abs" style="left:0;top:259px;width:275px;height:28px;background:#041c4a;border-radius:5px 0 0 5px"></div>
<div class="abs" style="left:0;top:288.7px;width:275px;height:40.2px;background:#090c29"></div>
<div class="abs" style="left:0;top:359.9px;width:275px;height:28px;background:#041c4a"></div>
<div class="abs" style="left:0;top:359.9px;width:6px;height:28px;background:#5acce6;border-radius:3px 0 0 3px"></div>
<div class="t" style="left:97.4px;top:12px;font-size:14px;color:#348cfd;letter-spacing:-0.05px">Segmentation</div>
<div class="t" style="left:10.3px;top:50.6px;font-size:14px;color:#b3cdee;letter-spacing:-0.05px">Segmentation Tools</div>
<div class="t" style="left:10.3px;top:265.6px;font-size:14px;color:#b3cdee;letter-spacing:-0.05px">Segmentations</div>
<!-- tool buttons -->
<div class="abs tb" style="left:7.9px;top:81.9px;height:34px"></div><div class="abs tb" style="left:47.9px;top:81.9px;height:34px"></div><div class="abs tb" style="left:87.9px;top:81.9px;height:34px"></div><div class="abs tb" style="left:127.9px;top:81.9px;height:34px"></div>
<div class="abs tb" style="left:7.9px;top:131.8px;width:104px"></div><div class="abs tb" style="left:7.9px;top:131.8px;background:#5acce6"></div>
<div class="abs tb" style="left:120px;top:131.8px"></div><div class="abs tb" style="left:160px;top:131.8px"></div><div class="abs tb" style="left:200px;top:131.8px"></div>
<div class="t" style="left:8px;top:183.4px;font-size:14px;color:#fff;letter-spacing:-0.3px">Radius (mm)</div>
<div class="abs" style="left:96px;top:189.2px;width:118px;height:3.6px;border-radius:2px;background:#12306e"></div>
<div class="abs" style="left:96px;top:189.2px;width:32px;height:3.6px;border-radius:2px;background:#348cfd"></div>
<div class="abs" style="left:122.6px;top:184.4px;width:13.2px;height:13.2px;border-radius:50%;background:#348cfd;box-shadow:0 0 0 1.6px #090c29"></div>
<div class="abs" style="left:222.2px;top:177.4px;width:49.6px;height:27.4px;border:1px solid #2e2f86;border-radius:4px;background:#050615"></div>
<div class="t" style="left:231.4px;top:184.2px;font-size:14px;color:#fff">25</div>
<div class="t" style="left:8px;top:220.4px;font-size:14px;color:#fff;letter-spacing:-0.35px">Shape</div>
<div class="abs" style="left:157px;top:213px;width:115px;height:28px;border-radius:5px;background:#0f2558"></div>
<div class="abs" style="left:157px;top:213px;width:51.2px;height:28px;border-radius:5px;background:#1a4895"></div>
<div class="t" style="left:165.2px;top:219.4px;font-size:14px;color:#fff;letter-spacing:-0.1px">Circle</div>
<div class="t" style="left:220.4px;top:219.4px;font-size:14px;color:#fff;letter-spacing:-0.1px">Sphere</div>
<!-- select -->
<div class="abs" style="left:34.4px;top:295.3px;width:211.4px;height:27.4px;border:1px solid #2e2f86;border-radius:4px;background:#080a26"></div>
<div class="t" style="left:43.2px;top:301.4px;font-size:14px;color:#fff;letter-spacing:-0.2px">Segmentation 1</div>
<svg class="abs" style="left:0;top:0;overflow:visible" width="275" height="400" viewBox="1116 43 275 400" fill="none" stroke-linecap="round" stroke-linejoin="round">

 <!-- tool icons row1 -->
 <g stroke="#d0d4e0" stroke-width="1.25">
  <!-- plane -->
  <path d="M1130 138.6 L1132 137.6 L1135.6 139 L1140 137 L1134.6 133.6 L1137.2 132.4 L1144.6 135 L1148.6 133.2 Q1150.6 132.4 1151.2 133.8 Q1151.6 135.2 1149.8 136 L1136 142.2 Q1134.4 142.8 1133.2 142 Z"/>
  <path d="M1143.4 139.2 L1142.6 142.4" stroke-width="1"/>
  <path d="M1142.40 141.50 Q1142.88 145.02 1146.40 145.50 Q1142.88 145.98 1142.40 149.50 Q1141.92 145.98 1138.40 145.50 Q1141.92 145.02 1142.40 141.50 Z" fill="#e4e7f0" stroke="#e4e7f0" stroke-width="0.5"/>
  <path d="M1138.20 147.20 Q1138.51 149.49 1140.80 149.80 Q1138.51 150.11 1138.20 152.40 Q1137.89 150.11 1135.60 149.80 Q1137.89 149.49 1138.20 147.20 Z" fill="#e4e7f0" stroke="#e4e7f0" stroke-width="0.5"/>
  <!-- blob X -->
  <path d="M1211.2 143 Q1210.4 136.6 1216 134 Q1222 131.8 1227.2 134.2 Q1230.6 136.4 1229.4 141.2 Q1227.6 147.4 1221.6 149.6 Q1215.6 151 1212.6 147.6 Q1211.4 145.6 1211.2 143 Z"/>
  <path d="M1214.6 144.8 L1226.2 138.4 M1217.8 137.4 L1222.4 145.8"/>
  <!-- tag -->
  <path d="M1250.8 143.4 L1263 132.2 L1269.4 131.4 L1269.6 137.4 L1257 150.6 L1255.2 146 Z"/>
  <circle cx="1264.9" cy="136" r="1.5"/>
 </g>
 <g stroke="#7f8db3" stroke-width="1.25">
  <path d="M1175.2 131.3 H1184.4 M1177.2 136.4 H1182.4 M1171.2 141.4 H1188.6 M1177.2 145.6 H1182.4 M1175.2 150.5 H1184.4"/>
 </g>
 <!-- tool icons row2 -->
 <g stroke="#0a1024" stroke-width="1.4">
  <path d="M1149.4 181.4 L1140 191.2" stroke-width="4.4"/>
  <path d="M1149.4 181.4 L1140 191.2" stroke-width="1.7" stroke="#5acce6"/>
  <path d="M1138.4 191.4 Q1134.4 190.8 1133.4 194.8 Q1132.8 198.2 1130.8 199.4 Q1134.6 201.4 1138 199.4 Q1141.2 197.2 1140.6 193.6 Z" fill="#5acce6"/>
 </g>
 <g stroke="#d0d4e0" stroke-width="1.25">
  <!-- eraser -->
  <path d="M1167.6 192.2 L1177.2 182.6 Q1178.4 181.6 1179.6 182.6 L1184.2 187 Q1185.2 188.2 1184.2 189.4 L1177.4 196.4 H1171.4 L1167.6 194.6 Q1166.6 193.4 1167.6 192.2 Z M1173.2 186.6 L1180.4 193.4 M1166.4 199.7 H1185.4"/>
  <!-- sliders 2 -->
  <path d="M1202 186.7 H1206.2 M1210.4 186.7 H1221.8 M1202 195.5 H1214.9 M1219.1 195.5 H1221.8"/>
  <circle cx="1208.3" cy="186.7" r="2.1"/><circle cx="1217" cy="195.5" r="2.1"/>
  <!-- circle sparkle -->
  <circle cx="1252" cy="190.7" r="9.6"/>
  <path d="M1253.70 188.90 Q1254.14 192.16 1257.40 192.60 Q1254.14 193.04 1253.70 196.30 Q1253.26 193.04 1250.00 192.60 Q1253.26 192.16 1253.70 188.90 Z" fill="#e4e7f0" stroke="#e4e7f0" stroke-width="0.5"/>
  <path d="M1249.60 184.90 Q1249.86 186.84 1251.80 187.10 Q1249.86 187.36 1249.60 189.30 Q1249.34 187.36 1247.40 187.10 Q1249.34 186.84 1249.60 184.90 Z" fill="#e4e7f0" stroke="#e4e7f0" stroke-width="0.5"/>
  <!-- lasso cursor -->
  <path d="M1295.6 196.2 A7.9 7.9 0 1 1 1299 187.6"/>
  <path d="M1294.8 191.6 L1299.6 196 L1297.4 196.4 L1298.4 199 L1297.2 199.4 L1296.2 196.9 L1294.8 198.2 Z" fill="#d0d4e0" stroke-width="0.6" transform="translate(0,-0.2)"/>
  <!-- shapes -->
  <rect x="1322.8" y="181.8" width="12.8" height="13" rx="2.2"/>
  <circle cx="1336.2" cy="193.8" r="5.9"/>
 </g>
 <!-- expand icon -->
 <path d="M1137.6 59.4 V68 M1124.2 63.7 H1134 M1130 59.6 L1134.2 63.7 L1130 67.8" stroke="#348cfd" stroke-width="1.5"/>
 <!-- sliders icons -->
 <g id="sl" stroke="#348cfd" stroke-width="1.2">
  <path d="M1352.6 95.2 H1358 M1361.8 95.2 H1368 M1352.6 101 H1362 M1365.8 101 H1368 M1352.6 106.8 H1356.6 M1360.4 106.8 H1368"/>
  <circle cx="1359.9" cy="95.2" r="1.9"/><circle cx="1363.9" cy="101" r="1.9"/><circle cx="1358.5" cy="106.8" r="1.9"/>
 </g>
 <g stroke="#348cfd" stroke-width="1.2" transform="translate(0,215)">
  <path d="M1352.6 95.2 H1358 M1361.8 95.2 H1368 M1352.6 101 H1362 M1365.8 101 H1368 M1352.6 106.8 H1356.6 M1360.4 106.8 H1368"/>
  <circle cx="1359.9" cy="95.2" r="1.9"/><circle cx="1363.9" cy="101" r="1.9"/><circle cx="1358.5" cy="106.8" r="1.9"/>
 </g>
 <path d="M1379.6 99.6 L1384.2 103.8 L1388.8 99.6 M1379.6 314.6 L1384.2 318.8 L1388.8 314.6" stroke="#348cfd" stroke-width="1.2"/>
 <!-- dots -->
 <g fill="#348cfd" stroke="none"><circle cx="1127.4" cy="352.1" r="1.9"/><circle cx="1133.8" cy="352.1" r="1.9"/><circle cx="1140.2" cy="352.1" r="1.9"/>
 <circle cx="1378" cy="417" r="2"/><circle cx="1383.9" cy="417" r="2"/><circle cx="1389.8" cy="417" r="2"/></g>
 <!-- select chevrons -->
 <path d="M1342.6 349.6 L1345.2 347 L1347.8 349.6 M1342.6 354.4 L1345.2 357 L1347.8 354.4" stroke="#5d6a8c" stroke-width="1.1"/>
 <!-- info -->
 <g stroke="#348cfd" stroke-width="1.1"><circle cx="1378.4" cy="352.1" r="8"/><path d="M1377.4 350.6 H1378.6 V356 M1376.8 356.2 H1380.4"/><circle cx="1378.4" cy="347.8" r="0.5"/></g>
 <!-- eyes -->
 <g id="eye" stroke="#348cfd" stroke-width="1.1"><path d="M1348.4 387.1 Q1352.4 381.6 1356.8 381.6 Q1361.2 381.6 1365.2 387.1 Q1361.2 392.6 1356.8 392.6 Q1352.4 392.6 1348.4 387.1 Z"/><circle cx="1356.8" cy="387.1" r="2.6"/></g>
 <g stroke="#348cfd" stroke-width="1.1" transform="translate(0,29.7)"><path d="M1348.4 387.1 Q1352.4 381.6 1356.8 381.6 Q1361.2 381.6 1365.2 387.1 Q1361.2 392.6 1356.8 392.6 Q1352.4 392.6 1348.4 387.1 Z"/><circle cx="1356.8" cy="387.1" r="2.6"/></g>
</svg>
</div>
<!-- VP OVERLAY -->
<div id="ovl" style="position:absolute;left:0;top:0;width:1391px;height:1135px;will-change:transform;pointer-events:none">
<div class="t" style="left:686.2px;top:53.2px;font-size:14.2px;color:#8494b8;text-shadow:0.35px 0 0 #8494b8;letter-spacing:-0.5px">AH</div>
<div class="t" style="left:286.2px;top:582.4px;font-size:14.2px;color:#7c90b8;text-shadow:0.3px 0 0 #7c90b8;transform:scaleX(0.9);transform-origin:left">R</div>
<div class="t vt" style="left:288.2px;color:#8390b0">W:</div>
<div class="t vt" style="left:306.6px;letter-spacing:0.6px">80</div>
<div class="t vt" style="left:332.6px;color:#8390b0">L:</div>
<div class="t vt" style="left:346.1px;letter-spacing:0.6px">30</div>
<div class="t vt" style="left:1020.2px;color:#8390b0">I:</div>
<div class="t vt" style="left:1029.6px;letter-spacing:0.62px">33 (33/40)</div>
</div>
<div class="abs" style="left:1099px;top:909px;width:7.6px;height:32px;border-radius:4px;background:#4b5162"></div>
<svg class="abs" style="left:0;top:0;overflow:visible" width="1391" height="1135" viewBox="0 0 1391 1135" fill="none" stroke-linecap="round" stroke-linejoin="round">
 <g stroke="#2a68b8" stroke-width="1.2">
  <path d="M292.6 61.6 L296.2 53.2 L299.8 61.6 M293.8 59 H298.6"/>
  <path d="M288 60.6 Q286.4 64.2 290.6 65.8 Q292.6 66.4 294.4 66.6 M292.4 64.6 L294.6 66.7 L292.2 68.4 M304.4 60.6 Q306.2 64 302 65.8 Q299.4 66.6 296.8 66.8"/>
 </g>
 <g stroke="#348cfd" stroke-width="1.2">
  <path d="M320 51.4 L329 56.8 L320 62.2 L311 56.8 Z M311 62 L320 67.4 L329 62"/>
 </g>
 <g stroke="#5acce6" stroke-width="1.9" stroke-linecap="butt" stroke-linejoin="miter">
  <path d="M1061.4 54.6 L1056 60.1 L1061.4 65.6 M1080.6 54.6 L1086 60.1 L1080.6 65.6"/>
 </g>
 <circle cx="296.2" cy="1112.9" r="7.2" stroke="#348cfd" stroke-width="1.3"/>
 <path d="M301.3 1107.8 A7.2 7.2 0 0 1 291.1 1118 Z" fill="#348cfd"/>
</svg>
<!-- MENUS -->
<div class="abs" id="m1" style="left:1122.4px;top:368.4px;width:210.6px;height:213.6px;background:#041c4a;border-radius:4.5px;border:1px solid #15256a"></div>
<div class="abs" style="left:1127px;top:504.2px;width:200.8px;height:31.6px;background:#0c2b6c;border-radius:5px"></div>
<div class="abs" style="left:1135px;top:408.7px;width:185px;height:1px;background:#02102e"></div>
<div class="abs" style="left:1135px;top:540.2px;width:185px;height:1px;background:#02102e"></div>
<div class="t mi" style="left:1162.6px;top:381.2px;letter-spacing:-0.14px">Create New Segmentation</div>
<div class="t" style="left:1134.8px;top:420.6px;font-size:12.3px;color:#74a9cf;letter-spacing:0.24px">Manage Current Segmentation</div>
<div class="t mi" style="left:1162.6px;top:448.4px;letter-spacing:-0.1px">Remove from Viewport</div>
<div class="t mi" style="left:1162.6px;top:480.4px;letter-spacing:-0.5px">Rename</div>
<div class="t mi" style="left:1162.6px;top:512.2px;letter-spacing:-0.17px">Download &amp; Export</div>
<div class="t mi" style="left:1162.6px;top:553px;color:#d1384a;text-shadow:none;font-weight:normal;letter-spacing:-0.2px">Delete</div>
<div class="abs" id="m2" style="left:999.1px;top:503.9px;width:127.6px;height:186.8px;background:#041c4a;border-radius:4.5px;border:1px solid #15256a"></div>
<div class="abs" style="left:1011.8px;top:624px;width:102px;height:1px;background:#02102e"></div>
<div class="t" style="left:1028.2px;top:515.4px;font-size:13px;color:#74a9cf;letter-spacing:-0.17px">Download</div>
<div class="t si" style="left:1007.8px;top:544px;letter-spacing:-0.02px">CSV Report</div>
<div class="t si" style="left:1007.8px;top:571.6px;letter-spacing:-0.36px">DICOM SEG</div>
<div class="t si" style="left:1007.8px;top:599px;letter-spacing:-0.26px">DICOM RTSS</div>
<div class="t" style="left:1028.2px;top:638.8px;font-size:13px;color:#74a9cf;letter-spacing:-0.1px">Export</div>
<div class="t si" style="left:1007.8px;top:665.6px;letter-spacing:-0.36px">DICOM SEG</div>
<svg class="abs" style="left:0;top:0;overflow:visible;pointer-events:none" width="1391" height="1135" viewBox="0 0 1391 1135" fill="none" stroke-linecap="round" stroke-linejoin="round">
 <g stroke="#d0d4e0" stroke-width="1.2">
  <path d="M1142.8 382.4 V395.2 M1136.4 388.8 H1149.2"/>
  <rect x="1138.6" y="451.2" width="12.8" height="12.8" rx="1.8"/><path d="M1137 460 H1136.4 Q1134.8 460 1134.8 458.4 V449.2 Q1134.8 447.6 1136.4 447.6 H1145.6 Q1147.2 447.6 1147.2 449.2 V449.8" stroke="#8d97b3"/>
  <path d="M1135.6 495.2 L1136.6 490.8 L1146.6 481 Q1147.8 480 1149 481 L1150.2 482.2 Q1151.2 483.4 1150.2 484.6 L1140.2 494.4 Z M1144.8 482.8 L1148.4 486.4 M1136.8 491 L1140 494.2"/>
  <path d="M1139.6 517.2 H1138 Q1136.8 517.2 1136.8 518.4 V526.4 Q1136.8 527.6 1138 527.6 H1147.6 Q1148.8 527.6 1148.8 526.4 V518.4 Q1148.8 517.2 1147.6 517.2 H1146 M1142.8 523 V513 M1140.2 515.4 L1142.8 512.8 L1145.4 515.4"/>
  <path d="M1310.4 515.8 L1314.4 519.8 L1310.4 523.8"/>
 </g>
 <g stroke="#d1384a" stroke-width="1.2"><circle cx="1142.8" cy="560.8" r="7.4"/><path d="M1140.2 558.2 L1145.4 563.4 M1145.4 558.2 L1140.2 563.4"/></g>
 <g stroke="#74a9cf" stroke-width="1.1">
  <circle cx="1013.9" cy="522.9" r="7.4"/><path d="M1013.9 519.2 V526.4 M1010.9 523.6 L1013.9 526.6 L1016.9 523.6"/>
  <path d="M1011.4 641.6 H1010.2 Q1009.2 641.6 1009.2 642.6 V649.2 Q1009.2 650.2 1010.2 650.2 H1017.6 Q1018.6 650.2 1018.6 649.2 V642.6 Q1018.6 641.6 1017.6 641.6 H1016.4 M1013.9 646.6 V638 M1011.7 640 L1013.9 637.8 L1016.1 640"/>
 </g>
</svg>

</div>
</body>
</html>
